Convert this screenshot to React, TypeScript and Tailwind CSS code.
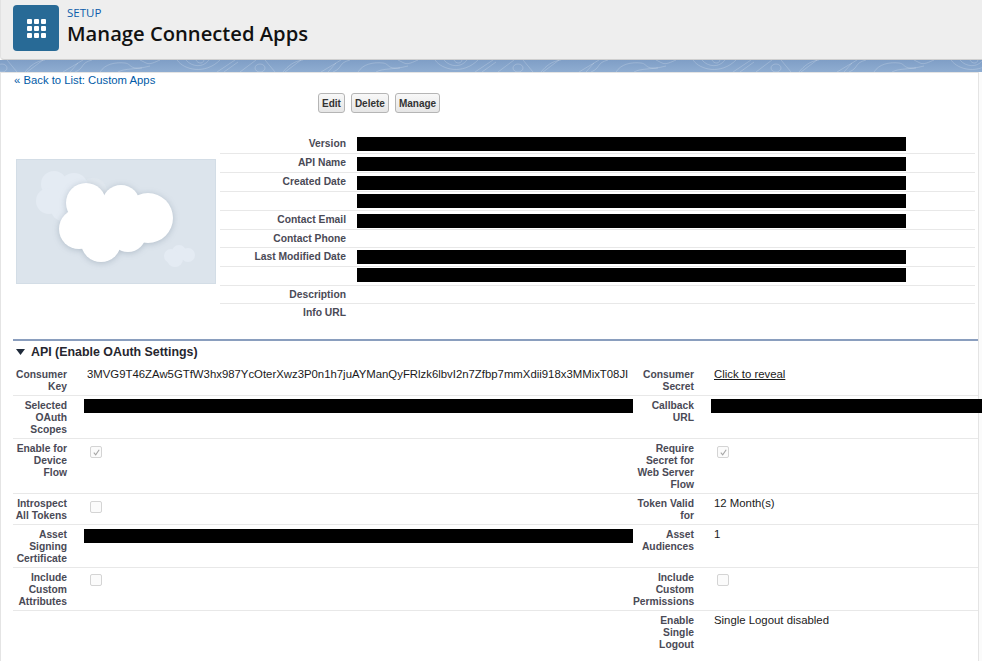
import React from "react";

const sans = "font-['Liberation_Sans',Arial,sans-serif]";

function Bar({ className = "w-[549px]" }: { className?: string }) {
  return <div className={`h-[14px] bg-black ${className}`} />;
}

function TopRow({ label, bar, last, pad = "pt-[2px]" }: { label?: string; bar?: boolean; last?: boolean; pad?: string }) {
  return (
    <div className={`flex ${bar ? "h-[19px]" : "h-[18px]"} ${last ? "" : "border-b border-[#e8e8e8]"}`}>
      <div className="w-[126px] pt-[2px] text-right text-[10.3px] leading-[14px] font-bold text-[#4a4a56]">{label}</div>
      {bar && <div className={`ml-[11px] ${pad}`}><Bar /></div>}
    </div>
  );
}

function Label({ lines }: { lines: string[] }) {
  return (
    <div className="w-full translate-y-[1px] text-right text-[10.3px] leading-[12px] font-bold text-[#4a4a56]">
      {lines.map((l) => (
        <div key={l}>{l}</div>
      ))}
    </div>
  );
}

function Check({ checked, top = "mt-[4px]" }: { checked?: boolean; top?: string }) {
  return (
    <div className={`${top} ml-[6px] flex h-[12px] w-[12px] items-center justify-center rounded-[2px] border border-[#d4d4d4] bg-[#fbfbfb]`}>
      {checked && (
        <svg viewBox="0 0 10 10" className="h-[9px] w-[9px]">
          <path d="M2 5.2 L4.1 7.6 L8 2" fill="none" stroke="#a6a6a6" strokeWidth="1.2" />
        </svg>
      )}
    </div>
  );
}

function Text({ children }: { children: React.ReactNode }) {
  return <div className="pl-[3px] text-[11.37px] leading-[12px] whitespace-nowrap text-[#1a1a1a]">{children}</div>;
}

function ApiRow({
  l1,
  v1,
  l2,
  v2,
  last,
}: {
  l1?: string[];
  v1?: React.ReactNode;
  l2: string[];
  v2: React.ReactNode;
  last?: boolean;
}) {
  return (
    <div className={`flex py-[3px] ${last ? "" : "border-b border-[#e8e8e8]"}`}>
      <div className="w-[54px] shrink-0">{l1 && <Label lines={l1} />}</div>
      <div className="ml-[17px] w-[549px] shrink-0">{v1}</div>
      <div className="w-[61px] shrink-0"><Label lines={l2} /></div>
      <div className="ml-[17px] grow">{v2}</div>
    </div>
  );
}

function Btn({ children }: { children: React.ReactNode }) {
  return (
    <button className="flex h-[20px] items-center rounded-[3px] border border-[#b5b5b5] bg-gradient-to-b from-[#f8f8f8] to-[#e6e6e6] px-[3px] text-[10px] font-bold text-[#333333]">
      {children}
    </button>
  );
}

function Tile({ dx }: { dx: number }) {
  return (
    <g transform={`translate(${dx} 0)`}>
      <ellipse cx="2" cy="8" rx="5" ry="4" />
      <path d="M7 0 L17 12 M25 12 C30 6 36 1 45 0 M27 12 L43 0" />
      <path d="M63 12 L83 0 M70 12 L78 3 M75 12 C85 8 80 3 92 0" />
      <path d="M100 12 C105 4 115 2 125 3 C132 4 128 9 142 8 M118 12 C125 8 135 10 150 6 M140 0 L146 3 C150 5 155 2 160 0" />
      <path d="M177 0 C184 10 205 15 220 0 M186 0 C192 7 203 8 209 0 M196 0 C198 4 203 4 204 0" />
      <path d="M217 12 L235 0 M224 12 L238 2 M240 12 L256 0" />
    </g>
  );
}

function Band() {
  return (
    <div className="h-[12px] overflow-hidden bg-gradient-to-b from-[#7f9ec6] to-[#8fadd1]">
      <svg viewBox="0 0 982 12" className="block h-[12px] w-[982px]" fill="none" stroke="#ffffff" strokeOpacity="0.2" strokeWidth="1">
        <Tile dx={0} />
        <Tile dx={258} />
        <Tile dx={516} />
        <Tile dx={774} />
      </svg>
    </div>
  );
}

function Cloud() {
  const main: [number, number, number][] = [
    [70, 44, 20], [105, 45, 19], [132, 59, 25], [63, 70, 20], [85, 83, 20], [112, 75, 18], [95, 62, 25],
  ];
  const back: [number, number, number][] = [
    [38, 25, 13], [58, 28, 14], [33, 42, 13], [47, 50, 12], [55, 40, 14],
  ];
  const small: [number, number, number][] = [
    [159, 100, 8], [163, 93, 7], [172, 96, 7], [155, 97, 7],
  ];
  return (
    <div className="mt-[24px] ml-[3px] h-[125px] w-[200px] shrink-0 border border-[#d3dde6] bg-[#dce4ec]">
      <svg viewBox="1 1 198 123" className="block h-full w-full">
        <circle cx="77" cy="33" r="14" fill="#e0e7ee" />
        <g fill="#e4ebf3">
          {back.map(([x, y, r]) => <circle key={`${x}-${y}`} cx={x} cy={y} r={r} />)}
          {small.map(([x, y, r]) => <circle key={`${x}-${y}`} cx={x} cy={y} r={r} />)}
        </g>
        <g fill="#ffffff" className="drop-shadow-[0_1px_3px_rgba(70,90,110,0.28)]">
          {main.map(([x, y, r]) => <circle key={`${x}-${y}`} cx={x} cy={y} r={r} />)}
        </g>
      </svg>
    </div>
  );
}

export default function App() {
  return (
    <div className={`h-[661px] w-[982px] overflow-hidden bg-[#fbfbfb] ${sans}`}>
      <header className="flex h-[60px] items-start rounded-bl-[4px] border-b border-l border-[#cfcfcf] border-l-[#e2e2e2] bg-[#eeeeee] pt-[5px] pl-[12px]">
        <div className="flex h-[46px] w-[46px] items-center justify-center rounded-[4px] bg-[#286a96]">
          <div className="grid grid-cols-3 gap-[2px]">
            {Array.from({ length: 9 }).map((_, i) => (
              <div key={i} className="h-[5px] w-[5px] rounded-[1px] bg-white" />
            ))}
          </div>
        </div>
        <div className="ml-[8px] font-['Open_Sans',sans-serif]">
          <div className="text-[11.5px] leading-[15px] text-[#0b5cab]">SETUP</div>
          <div className="text-[20.2px] leading-[26px] font-semibold text-[#111111]">Manage Connected Apps</div>
        </div>
      </header>
      <Band />
      <main className="h-[589px] w-[979px] border-t border-r border-l border-[#e4e4e4] bg-white pl-[12px]">
        <a className="block pl-[1px] text-[11.3px] leading-[14px] text-[#015ba7]">« Back to List: Custom Apps</a>
        <div className="mt-[6px] ml-[305px] flex gap-[6px]">
          <Btn>Edit</Btn>
          <Btn>Delete</Btn>
          <Btn>Manage</Btn>
        </div>
        <div className="mt-[22px] flex">
          <Cloud />
          <div className="ml-[4px] w-[755px]">
            <TopRow label="Version" bar />
            <TopRow label="API Name" bar pad="pt-[3px]" />
            <TopRow label="Created Date" bar pad="pt-[3px]" />
            <TopRow bar />
            <TopRow label="Contact Email" bar pad="pt-[3px]" />
            <TopRow label="Contact Phone" />
            <TopRow label="Last Modified Date" bar />
            <TopRow bar pad="pt-[1px]" />
            <TopRow label="Description" />
            <TopRow label="Info URL" last />
          </div>
        </div>
        <section className="mt-[17px] border-t-2 border-[#8a9ebe]">
          <div className="flex h-[24px] items-center pb-[2px] pl-[3px]">
            <svg viewBox="0 0 9 6" className="h-[6px] w-[9px]"><path d="M0 0 H9 L4.5 6 Z" fill="#1f2a3a" /></svg>
            <h3 className="ml-[6px] text-[12.4px] font-bold text-[#26262e]">API (Enable OAuth Settings)</h3>
          </div>
          <ApiRow
            l1={["Consumer", "Key"]}
            v1={<Text>3MVG9T46ZAw5GTfW3hx987YcOterXwz3P0n1h7juAYManQyFRlzk6lbvI2n7Zfbp7mmXdii918x3MMixT08JI</Text>}
            l2={["Consumer", "Secret"]}
            v2={<Text><span className="underline">Click to reveal</span></Text>}
          />
          <ApiRow l1={["Selected", "OAuth", "Scopes"]} v1={<Bar />} l2={["Callback", "URL"]} v2={<Bar className="relative w-[271px]" />} />
          <ApiRow l1={["Enable for", "Device", "Flow"]} v1={<Check checked />} l2={["Require", "Secret for", "Web Server", "Flow"]} v2={<Check checked />} />
          <ApiRow l1={["Introspect", "All Tokens"]} v1={<Check />} l2={["Token Valid", "for"]} v2={<Text>12 Month(s)</Text>} />
          <ApiRow l1={["Asset", "Signing", "Certificate"]} v1={<Bar className="mt-[1px] w-[549px]" />} l2={["Asset", "Audiences"]} v2={<Text>1</Text>} />
          <ApiRow l1={["Include", "Custom", "Attributes"]} v1={<Check top="mt-[3px]" />} l2={["Include", "Custom", "Permissions"]} v2={<Check top="mt-[3px]" />} />
          <ApiRow last l2={["Enable", "Single", "Logout"]} v2={<Text>Single Logout disabled</Text>} />
        </section>
      </main>
    </div>
  );
}
